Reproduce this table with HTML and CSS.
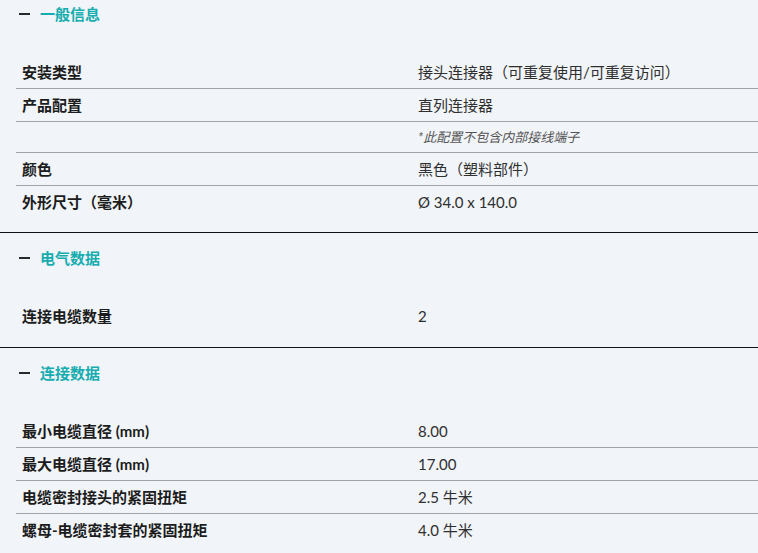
FILE: index.html
```html
<!DOCTYPE html>
<html lang="zh-CN">
<head>
<meta charset="utf-8">
<title>技术数据</title>
<link rel="stylesheet" href="styles.css">
</head>
<body>
<section class="section first">
  <div class="section-head"><span class="minus"></span><span class="title">一般信息</span></div>
  <div class="rows">
    <div class="row"><div class="label">安装类型</div><div class="value">接头连接器（可重复使用/可重复访问）</div></div>
    <div class="row"><div class="label">产品配置</div><div class="value">直列连接器</div></div>
    <div class="row note"><div class="label"></div><div class="value">*此配置不包含内部接线端子</div></div>
    <div class="row"><div class="label">颜色</div><div class="value">黑色（塑料部件）</div></div>
    <div class="row"><div class="label">外形尺寸（毫米）</div><div class="value">Ø 34.0 x 140.0</div></div>
  </div>
</section>
<section class="section">
  <div class="section-head"><span class="minus"></span><span class="title">电气数据</span></div>
  <div class="rows">
    <div class="row"><div class="label">连接电缆数量</div><div class="value">2</div></div>
  </div>
</section>
<section class="section last">
  <div class="section-head"><span class="minus"></span><span class="title">连接数据</span></div>
  <div class="rows">
    <div class="row"><div class="label">最小电缆直径 (mm)</div><div class="value">8.00</div></div>
    <div class="row"><div class="label">最大电缆直径 (mm)</div><div class="value">17.00</div></div>
    <div class="row"><div class="label">电缆密封接头的紧固扭矩</div><div class="value">2.5 牛米</div></div>
    <div class="row"><div class="label">螺母-电缆密封套的紧固扭矩</div><div class="value">4.0 牛米</div></div>
  </div>
</section>
</body>
</html>
```

FILE: styles.css
```css
html, body {
  margin: 0;
  padding: 0;
  background: #f1f4f8;
}
body {
  font-family: Lato, "Noto Sans CJK SC", sans-serif;
  font-size: 15px;
  color: #2b2b2b;
  overflow: hidden;
}
.section {
  padding: 15px 0 15px;
  border-bottom: 1px solid #111;
}
.section.first {
  padding-top: 4px;
  padding-bottom: 14px;
}
.section.last {
  border-bottom: none;
}
.section-head {
  display: flex;
  align-items: center;
  height: 20px;
  padding-left: 19px;
  gap: 10px;
}
.minus {
  width: 11px;
  height: 2px;
  background: #2a2a2a;
}
.title {
  color: #17adb0;
  font-weight: 700;
  font-size: 15px;
  line-height: 20px;
}
.rows {
  margin: 32px 0 0 16px;
}
.row {
  display: grid;
  grid-template-columns: 396px 1fr;
  padding: 6px 0;
  line-height: 20px;
  border-bottom: 1px solid #a2a2a4;
}
.row:last-child {
  border-bottom: none;
}
.label {
  padding-left: 6px;
  font-weight: 700;
  color: #1c1c1c;
}
.value {
  padding-left: 6px;
  color: #2f2f2f;
}
.row.note {
  line-height: 18px;
}
.row.note .value {
  font-size: 13px;
  font-style: italic;
  color: #555;
}
```
